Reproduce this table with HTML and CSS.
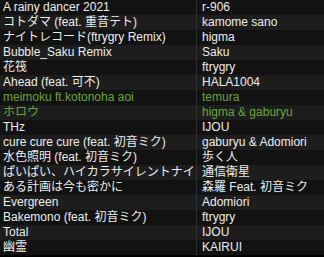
FILE: index.html
```html
<!DOCTYPE html>
<html lang="ja">
<head>
<meta charset="utf-8">
<link rel="stylesheet" href="styles.css">
</head>
<body>
<table class="songs">
<tbody>
<tr><td class="title">A rainy dancer 2021</td><td class="artist">r-906</td></tr>
<tr><td class="title">コトダマ (feat. 重音テト)</td><td class="artist">kamome sano</td></tr>
<tr><td class="title">ナイトレコード(ftrygry Remix)</td><td class="artist">higma</td></tr>
<tr><td class="title">Bubble_Saku Remix</td><td class="artist">Saku</td></tr>
<tr><td class="title">花筏</td><td class="artist">ftrygry</td></tr>
<tr><td class="title">Ahead (feat. 可不)</td><td class="artist">HALA1004</td></tr>
<tr class="hl"><td class="title">meimoku ft.kotonoha aoi</td><td class="artist">temura</td></tr>
<tr class="hl"><td class="title">ホロウ</td><td class="artist">higma &amp; gaburyu</td></tr>
<tr><td class="title">THz</td><td class="artist">IJOU</td></tr>
<tr><td class="title">cure cure cure (feat. 初音ミク)</td><td class="artist">gaburyu &amp; Adomiori</td></tr>
<tr><td class="title">水色照明 (feat. 初音ミク)</td><td class="artist">歩く人</td></tr>
<tr><td class="title">ぱいぱい、ハイカラサイレントナイト</td><td class="artist">通信衛星</td></tr>
<tr><td class="title">ある計画は今も密かに</td><td class="artist">森羅 Feat. 初音ミク</td></tr>
<tr><td class="title">Evergreen</td><td class="artist">Adomiori</td></tr>
<tr><td class="title">Bakemono (feat. 初音ミク)</td><td class="artist">ftrygry</td></tr>
<tr><td class="title">Total</td><td class="artist">IJOU</td></tr>
<tr><td class="title">幽霊</td><td class="artist">KAIRUI</td></tr>
</tbody>
</table>
</body>
</html>
```
FILE: styles.css
```css
html, body {
  margin: 0;
  padding: 0;
  background: #000;
}
body {
  width: 324px;
  height: 257px;
  overflow: hidden;
  font-family: "Liberation Sans", Arial, "Noto Sans CJK JP", sans-serif;
  font-size: 12px;
  color: #ececec;
}
.songs {
  border-collapse: collapse;
  width: 324px;
  table-layout: fixed;
}
.songs tr {
  height: 15px;
  background: #121212;
}
.songs tr:nth-child(even) {
  background: #1d1d1d;
}
.songs td {
  padding: 0 0 0 3px;
  height: 15px;
  line-height: 15px;
  white-space: nowrap;
  overflow: hidden;
  vertical-align: middle;
}
.songs .title {
  width: 193px;
  border-right: 1px solid #2e2e2e;
}
.songs .artist {
  padding-left: 5px;
}
.songs tr.hl td {
  color: #6aa53a;
}
```
